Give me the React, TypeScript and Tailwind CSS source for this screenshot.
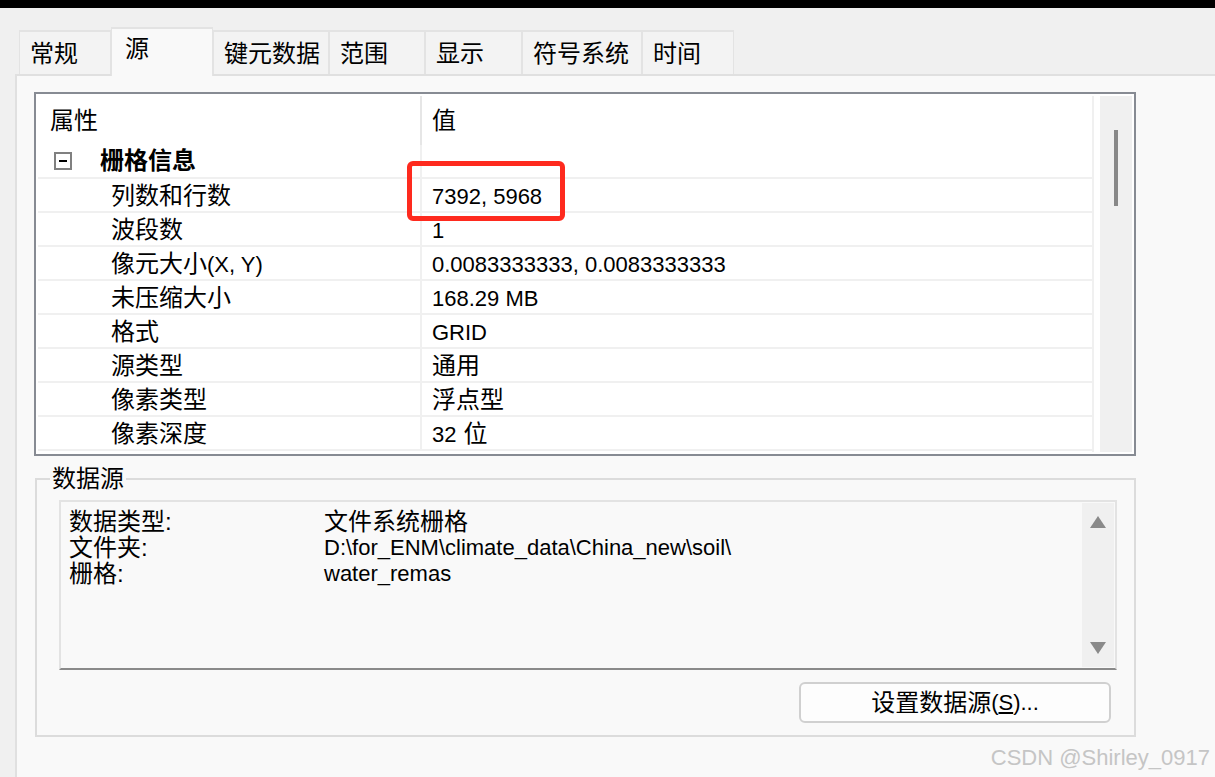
import React from "react";

const TABS = [
  { label: "常规", w: "w-[92px]" },
  { label: "源", w: "w-[102px]", active: true },
  { label: "键元数据", w: "w-[116px]" },
  { label: "范围", w: "w-[96px]" },
  { label: "显示", w: "w-[97px]" },
  { label: "符号系统", w: "w-[120px]" },
  { label: "时间", w: "w-[92px]" },
];

// zh = whole-width chinese text, runs a touch bigger than latin in the dialog font
const Zh = ({ children }: { children: React.ReactNode }) => <span className="text-[24px]">{children}</span>;

const ROWS: { name: React.ReactNode; value: React.ReactNode }[] = [
  { name: <Zh>列数和行数</Zh>, value: "7392, 5968" },
  { name: <Zh>波段数</Zh>, value: "1" },
  { name: <><Zh>像元大小</Zh>(X, Y)</>, value: "0.0083333333, 0.0083333333" },
  { name: <Zh>未压缩大小</Zh>, value: "168.29 MB" },
  { name: <Zh>格式</Zh>, value: "GRID" },
  { name: <Zh>源类型</Zh>, value: <Zh>通用</Zh> },
  { name: <Zh>像素类型</Zh>, value: <Zh>浮点型</Zh> },
  { name: <Zh>像素深度</Zh>, value: <>32<span className="ml-[7px] text-[24px]">位</span></> },
];

export default function App() {
  return (
    <div className="relative w-[1215px] h-[777px] overflow-hidden bg-[#f0f0f0] text-black text-[22px] font-['Liberation_Sans','Noto_Sans_CJK_SC',sans-serif] flex flex-col">
      <div className="h-[8px] bg-black shrink-0" />

      {/* Tabs */}
      <div className="h-[66px] shrink-0 flex items-end pl-[19px]">
        {TABS.map(t =>
          t.active ? (
            <div key={t.label} className={`${t.w} h-[49px] -mb-[2px] relative z-10 bg-[#f9f9f9] border-x border-t-2 border-[#e3e3e3] pl-[13px] pb-[8px] flex items-center text-[24px]`}>
              {t.label}
            </div>
          ) : (
            <div key={t.label} className={`${t.w} h-[44px] bg-[#f3f3f3] border-x border-t-2 border-[#e3e3e3] pl-[10px] pt-[2px] flex items-center text-[24px]`}>
              {t.label}
            </div>
          )
        )}
      </div>

      {/* Panel */}
      <div className="flex-1 ml-[15px] border-l-2 border-t-2 border-[#e0e0e0] bg-[#f9f9f9] pl-[17px]">
        {/* Property grid */}
        <div className="mt-[16px] w-[1102px] h-[364px] border-2 border-[#878b93] bg-white p-[2px] flex">
          <div className="w-[1058px] h-full overflow-hidden border-r-2 border-[#f0f0f0]">
            <div className="h-[49px] flex">
              <div className="w-[382px] pl-[12px] flex items-center"><Zh>属性</Zh></div>
              <div className="flex-1 border-l-2 border-[#e6e6e6] pl-[10px] flex items-center"><Zh>值</Zh></div>
            </div>
            <div className="h-[34px] flex border-b-2 border-[#f0f0f0]">
              <div className="w-[382px] flex items-center">
                <div className="ml-[16px] w-[18px] h-[18px] border-2 border-[#808080] flex items-center justify-center">
                  <div className="w-[8px] h-[2px] bg-black" />
                </div>
                <div className="ml-[28px] text-[24px] font-bold">栅格信息</div>
              </div>
              <div className="flex-1 border-l-2 border-[#f0f0f0]" />
            </div>
            {ROWS.map((r, i) => (
              <div key={i} className="h-[34px] flex border-b-2 border-[#f0f0f0]">
                <div className="w-[382px] pl-[73px] pt-[2px] flex items-center">{r.name}</div>
                <div className="flex-1 border-l-2 border-[#f0f0f0] pl-[10px] pt-[2px] flex items-center">{r.value}</div>
              </div>
            ))}
          </div>
          <div className="ml-[6px] w-[32px] h-full bg-[#f0f0f0] relative">
            <div className="absolute left-[14px] top-[34px] w-[4px] h-[76px] bg-[#888888]" />
          </div>
        </div>

        {/* Data source */}
        <fieldset className="mt-[10px] ml-[1px] w-[1101px] h-[271px] border-2 border-[#dcdcdc] p-0">
          <legend className="ml-[13px] px-[2px] text-[24px] leading-[26px]">数据源</legend>
          <div className="ml-[22px] mt-[8px] w-[1058px] h-[170px] border-2 border-[#e3e3e3] border-b-[#8a8a8a] flex pr-[1px] py-[1px]">
            <div className="flex-1 pl-[8px] pt-[6px] grid grid-cols-[255px_1fr] leading-[25px] content-start">
              <div><Zh>数据类型:</Zh></div>
              <div><Zh>文件系统栅格</Zh></div>
              <div><Zh>文件夹:</Zh></div>
              <div>D:\for_ENM\climate_data\China_new\soil\</div>
              <div><Zh>栅格:</Zh></div>
              <div>water_remas</div>
            </div>
            <div className="w-[32px] bg-[#f0f0f0] flex flex-col items-center justify-between py-[13px]">
              <svg width="16" height="12" viewBox="0 0 16 12"><path d="M8 0 L16 12 L0 12 Z" fill="#8a8a8a" /></svg>
              <svg width="16" height="12" viewBox="0 0 16 12"><path d="M0 0 L16 0 L8 12 Z" fill="#8a8a8a" /></svg>
            </div>
          </div>
          <div className="ml-[762px] mt-[12px] w-[312px] h-[41px] border-2 border-[#d0d0d0] rounded-[6px] bg-[#fdfdfd] flex items-center justify-center">
            <Zh>设置数据源</Zh>(<span className="underline">S</span>)...
          </div>
        </fieldset>
      </div>

      {/* highlight box */}
      <div className="absolute left-[407px] top-[161px] w-[158px] h-[60px] border-[5px] border-[#fe2a1e] rounded-[6px]" />

      <div className="absolute right-[5px] bottom-[8px] text-[22px] leading-[22px] text-[#c5c5c5]">CSDN @Shirley_0917</div>
    </div>
  );
}
